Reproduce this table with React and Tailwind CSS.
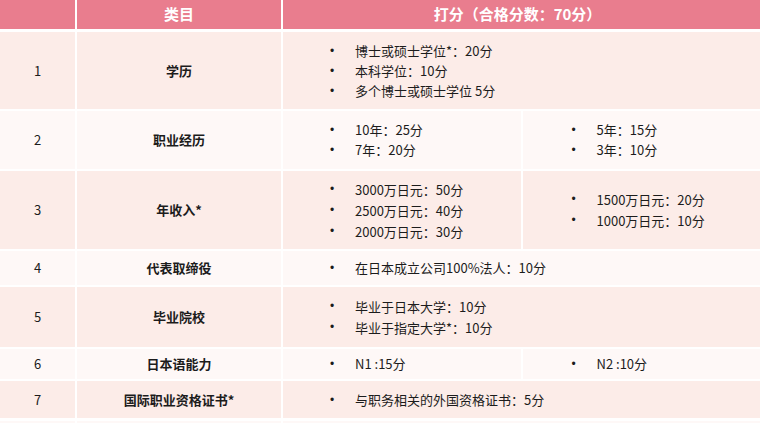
import React from "react";

const ROWS = [
  {
    no: "1",
    name: "学历",
    h: "h-[77px]",
    bg: "bg-[#fcece8]",
    lead: "leading-[20px]",
    left: ["博士或硕士学位*：20分", "本科学位：10分", "多个博士或硕士学位 5分"],
  },
  {
    no: "2",
    name: "职业经历",
    h: "h-[58px]",
    bg: "bg-[#fef8f7]",
    lead: "leading-[20px]",
    left: ["10年：25分", "7年：20分"],
    right: ["5年：15分", "3年：10分"],
  },
  {
    no: "3",
    name: "年收入*",
    h: "h-[78px]",
    bg: "bg-[#fcece8]",
    lead: "leading-[21px]",
    left: ["3000万日元：50分", "2500万日元：40分", "2000万日元：30分"],
    right: ["1500万日元：20分", "1000万日元：10分"],
  },
  {
    no: "4",
    name: "代表取缔役",
    h: "h-[34px]",
    bg: "bg-[#fef8f7]",
    lead: "leading-[20px]",
    left: ["在日本成立公司100%法人：10分"],
  },
  {
    no: "5",
    name: "毕业院校",
    h: "h-[60px]",
    bg: "bg-[#fcece8]",
    lead: "leading-[21px]",
    left: ["毕业于日本大学：10分", "毕业于指定大学*：10分"],
  },
  {
    no: "6",
    name: "日本语能力",
    h: "h-[30px]",
    bg: "bg-[#fef8f7]",
    lead: "leading-[20px]",
    left: ["N1 :15分"],
    right: ["N2 :10分"],
  },
  {
    no: "7",
    name: "国际职业资格证书*",
    h: "h-[37px]",
    bg: "bg-[#fcece8]",
    lead: "leading-[20px]",
    left: ["与职务相关的外国资格证书：5分"],
  },
];

function Bullets({ items, lead, pad }) {
  return (
    <ul className={`flex flex-col justify-center h-full ${pad} ${lead}`}>
      {items.map((t) => (
        <li key={t} className="flex items-center">
          <span
            className="w-[25px] shrink-0 text-[12px]"
            style={{ fontFamily: '"Liberation Sans", sans-serif' }}
          >
            •
          </span>
          <span>{t}</span>
        </li>
      ))}
    </ul>
  );
}

export default function App() {
  return (
    <div
      className="w-[760px] h-[423px] overflow-hidden bg-white text-[13px] text-[#1c1c1c]"
      style={{ fontFamily: '"Noto Sans CJK SC", "Noto Sans", sans-serif' }}
    >
      <div className="grid grid-cols-[75px_204px_1fr] gap-x-[2px] h-[29px] mb-[3px] text-white font-bold text-[15px]">
        <div className="bg-[#e97d8e]" />
        <div className="bg-[#e97d8e] flex items-center justify-center">类目</div>
        <div className="bg-[#e97d8e] flex items-center justify-center pr-[8px]">
          打分（合格分数：70分）
        </div>
      </div>

      <div className="flex flex-col gap-y-[2px]">
        {ROWS.map((r) => (
          <div
            key={r.no}
            className={`grid grid-cols-[75px_204px_1fr] gap-x-[2px] ${r.h}`}
          >
            <div className={`${r.bg} flex items-center justify-center`}>{r.no}</div>
            <div className={`${r.bg} flex items-center justify-center font-bold`}>
              {r.name}
            </div>
            {r.right ? (
              <div className="grid grid-cols-2 gap-x-[2px]">
                <div className={r.bg}>
                  <Bullets items={r.left} lead={r.lead} pad="pl-[47px]" />
                </div>
                <div className={r.bg}>
                  <Bullets items={r.right} lead={r.lead} pad="pl-[49px]" />
                </div>
              </div>
            ) : (
              <div className={r.bg}>
                <Bullets items={r.left} lead={r.lead} pad="pl-[47px]" />
              </div>
            )}
          </div>
        ))}
        <div className="grid grid-cols-[75px_204px_1fr] gap-x-[2px] h-[10px] mt-[1px]">
          <div className="bg-[#fef8f7]" />
          <div className="bg-[#fef8f7]" />
          <div className="bg-[#fef8f7]" />
        </div>
      </div>
    </div>
  );
}
